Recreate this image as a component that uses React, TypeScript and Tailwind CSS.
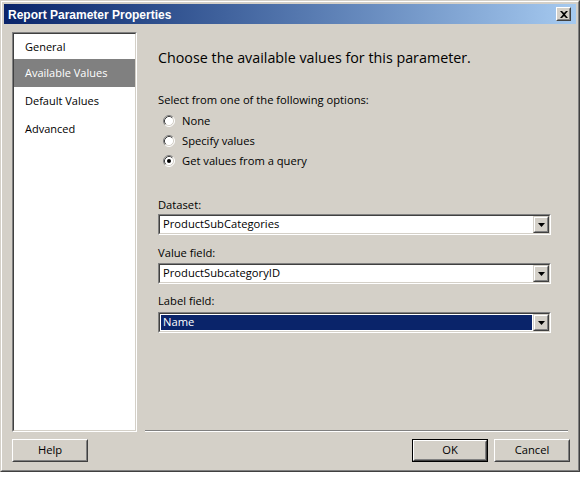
import React from "react";

const font = { fontFamily: '"Open Sans", "Noto Sans", sans-serif' };

const Radio: React.FC<{ checked?: boolean; label: string }> = ({ checked, label }) => (
  <div className="flex items-center h-[20px] pl-[5px]">
    <svg width="12" height="12" viewBox="0 0 12 12" className="shrink-0">
      <circle cx="6" cy="6" r="5" fill="#ffffff" />
      <path d="M2.11 9.89 A5.5 5.5 0 0 1 9.89 2.11" fill="none" stroke="#808080" strokeWidth="1" />
      <path d="M9.89 2.11 A5.5 5.5 0 0 1 2.11 9.89" fill="none" stroke="#ffffff" strokeWidth="1" />
      <path d="M2.82 9.18 A4.5 4.5 0 0 1 9.18 2.82" fill="none" stroke="#404040" strokeWidth="1" />
      <path d="M9.18 2.82 A4.5 4.5 0 0 1 2.82 9.18" fill="none" stroke="#d4d0c8" strokeWidth="1" />
      {checked && <circle cx="6" cy="6" r="2" fill="#000000" />}
    </svg>
    <span className="ml-[7px] text-[11.2px] leading-[16px] text-black">{label}</span>
  </div>
);

const ArrowButton: React.FC = () => (
  <div className="w-[16px] h-[17px] border border-t-[#d4d0c8] border-l-[#d4d0c8] border-r-[#404040] border-b-[#404040] shrink-0">
    <div className="w-full h-full border border-t-white border-l-white border-r-[#808080] border-b-[#808080] bg-[#d4d0c8] flex items-center justify-center">
      <svg width="7" height="4" viewBox="0 0 7 4">
        <path d="M0 0 H7 L3.5 4 Z" fill="#000000" />
      </svg>
    </div>
  </div>
);

const Dropdown: React.FC<{ value: string; selected?: boolean }> = ({ value, selected }) => (
  <div className="w-[393px] h-[21px] border border-t-[#808080] border-l-[#808080] border-r-white border-b-white">
    <div className="w-full h-full border border-t-[#404040] border-l-[#404040] border-r-[#d4d0c8] border-b-[#d4d0c8] bg-white flex items-center">
      <div className="flex-1 h-full p-[1px]">
        <div
          className={
            selected
              ? "h-full bg-[#0a246a] text-white flex items-center pl-[2px] text-[11.2px]"
              : "h-full text-black flex items-center pl-[2px] text-[11.2px]"
          }
        >
          {value}
        </div>
      </div>
      <ArrowButton />
    </div>
  </div>
);

const Button: React.FC<{ label: string; isDefault?: boolean }> = ({ label, isDefault }) => {
  const inner = (
    <div className="w-full h-full border border-t-white border-l-white border-r-[#404040] border-b-[#404040]">
      <div className="w-full h-full border border-t-[#d4d0c8] border-l-[#d4d0c8] border-r-[#808080] border-b-[#808080] bg-[#d4d0c8] flex items-center justify-center text-[11.2px] text-black">
        {label}
      </div>
    </div>
  );
  return (
    <div className={isDefault ? "w-[76px] h-[23px] border border-black" : "w-[76px] h-[23px]"}>
      {inner}
    </div>
  );
};

const navItems = ["General", "Available Values", "Default Values", "Advanced"];

export default function App() {
  return (
    <div className="w-[582px] h-[477px] bg-white" style={font}>
      <div className="w-[580px] h-[472px] border border-t-[#d4d0c8] border-l-[#d4d0c8] border-r-[#404040] border-b-[#404040]">
        <div className="w-full h-full border border-t-white border-l-white border-r-[#808080] border-b-[#808080] bg-[#d4d0c8] p-[2px] flex flex-col">
          {/* title bar */}
          <div className="h-[20px] flex items-center justify-between bg-gradient-to-r from-[#0a246a] to-[#a6caf0] pl-[4px] pr-[5px]">
            <span
              className="text-white font-bold text-[12px] leading-[20px] pt-[1px]"
              style={{ fontFamily: '"Liberation Sans", Arial, sans-serif' }}
            >
              Report Parameter Properties
            </span>
            <div className="w-[15px] h-[14px] border border-t-white border-l-white border-r-[#404040] border-b-[#404040]">
              <div className="w-full h-full border border-t-[#d4d0c8] border-l-[#d4d0c8] border-r-[#808080] border-b-[#808080] bg-[#d4d0c8] flex items-center justify-center">
                <svg width="8" height="7" viewBox="0 0 8 7">
                  <path d="M0 0 H2 L4 2 L6 0 H8 L5 3.5 L8 7 H6 L4 5 L2 7 H0 L3 3.5 Z" fill="#000000" />
                </svg>
              </div>
            </div>
          </div>

          {/* body */}
          <div className="flex-1 flex flex-col pl-[8px] pt-[8px]">
            <div className="flex">
              {/* nav */}
              <div className="w-[125px] h-[400px] border border-t-[#808080] border-l-[#808080] border-r-white border-b-white">
                <div className="w-full h-full border border-t-[#404040] border-l-[#404040] border-r-[#d4d0c8] border-b-[#d4d0c8] bg-white flex flex-col">
                  {navItems.map((item, i) => (
                    <div
                      key={item}
                      className={
                        (i === 0 ? "h-[25px] pt-[2px] " : "h-[28px] ") +
                        (i === 1 ? "bg-[#808080] text-white " : "text-black ") +
                        "flex items-center pl-[11px] text-[11px]"
                      }
                    >
                      {item}
                    </div>
                  ))}
                </div>
              </div>

              {/* content */}
              <div className="w-[423px] h-[400px] ml-[8px] flex flex-col">
                <div className="flex-1 pl-[13px] flex flex-col">
                  <div className="mt-[16px] h-[20px] leading-[20px] text-[14.3px] text-black">
                    Choose the available values for this parameter.
                  </div>
                  <div className="mt-[24px] h-[16px] leading-[16px] text-[11.2px] text-black">
                    Select from one of the following options:
                  </div>
                  <div className="mt-[3px] flex flex-col">
                    <Radio label="None" />
                    <Radio label="Specify values" />
                    <Radio label="Get values from a query" checked />
                  </div>
                  <div className="mt-[26px] h-[16px] leading-[16px] text-[11.2px] text-black">Dataset:</div>
                  <div className="mt-[1px]">
                    <Dropdown value="ProductSubCategories" />
                  </div>
                  <div className="mt-[10px] h-[16px] leading-[16px] text-[11.2px] text-black">Value field:</div>
                  <div className="mt-[2px]">
                    <Dropdown value="ProductSubcategoryID" />
                  </div>
                  <div className="mt-[9px] h-[16px] leading-[16px] text-[11.2px] text-black">Label field:</div>
                  <div className="mt-[3px]">
                    <Dropdown value="Name" selected />
                  </div>
                </div>
                <div className="h-[1px] bg-[#808080]" />
                <div className="h-[1px] bg-white" />
              </div>
            </div>

            {/* buttons */}
            <div className="mt-[7px] flex items-center">
              <Button label="Help" />
              <div className="flex-1" />
              <Button label="OK" isDefault />
              <div className="w-[6px]" />
              <Button label="Cancel" />
              <div className="w-[6px]" />
            </div>
          </div>
        </div>
      </div>
    </div>
  );
}
